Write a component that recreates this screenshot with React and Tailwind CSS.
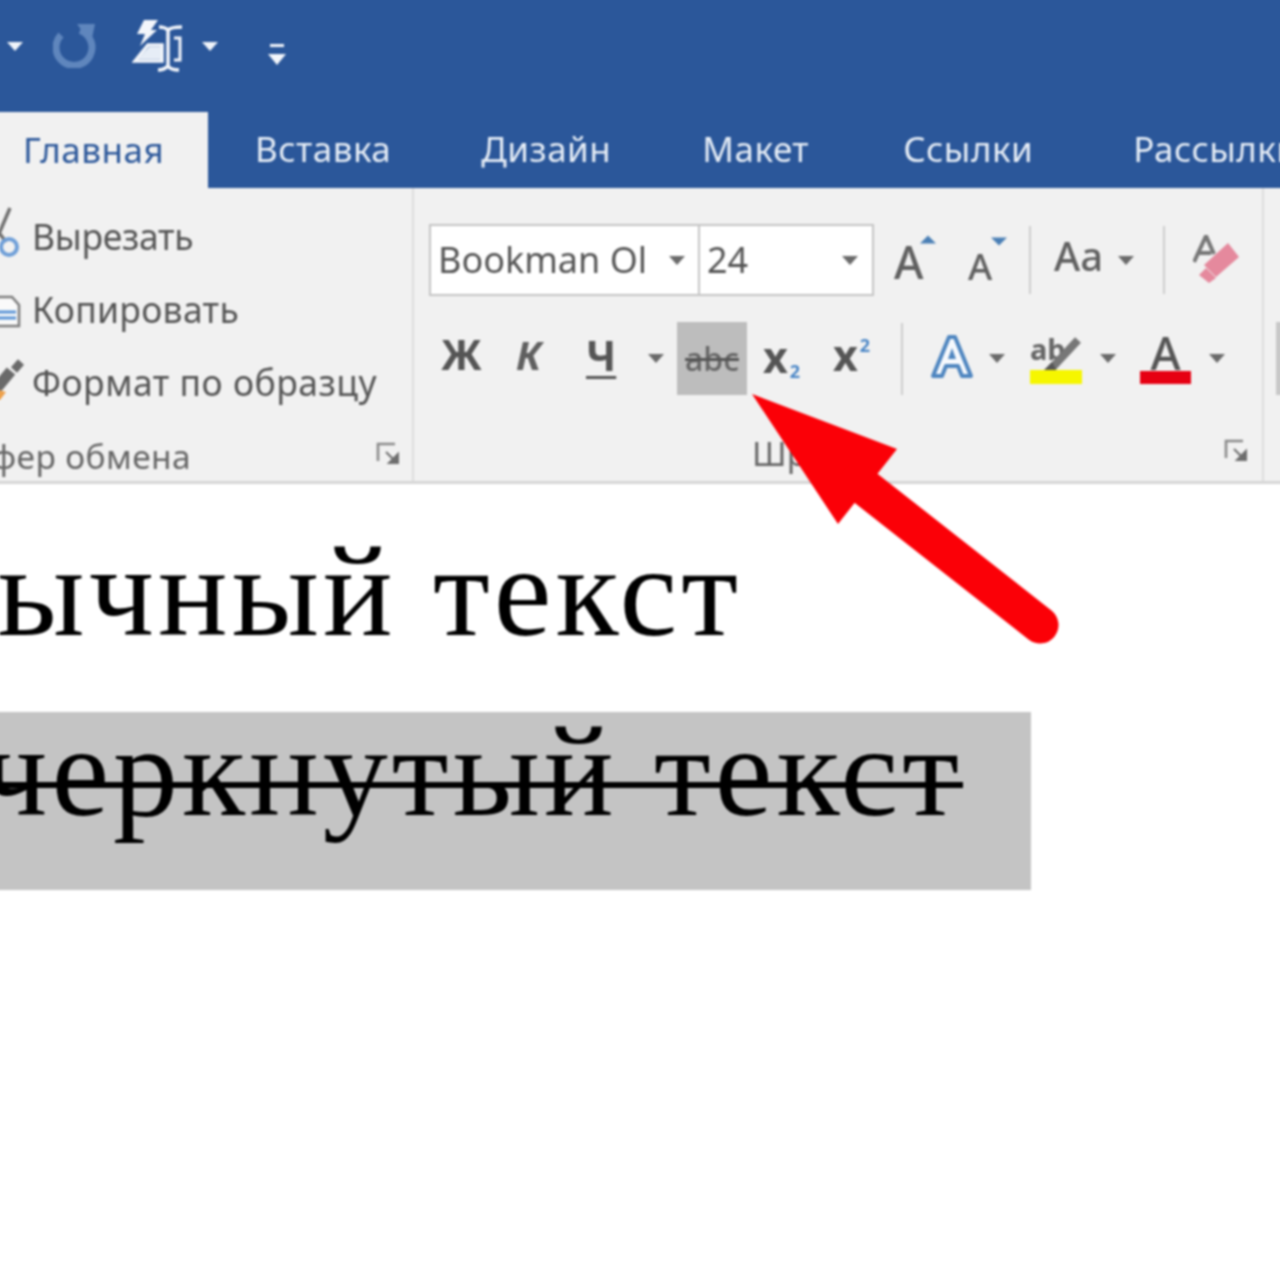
const Caret = ({ className = "", color = "#6a6a6a" }) => (
  <svg viewBox="0 0 16 9" className={`w-[16px] h-[9px] shrink-0 ${className}`}>
    <path d="M0 0H16L8 9Z" fill={color} />
  </svg>
);

const Launcher = ({ className = "" }) => (
  <svg viewBox="0 0 24 24" className={`w-[24px] h-[24px] shrink-0 ${className}`}>
    <path d="M2 20V3H19" fill="none" stroke="#8a8a8a" strokeWidth="2.6" />
    <path d="M10 11L20 21M22 13V22H13Z" fill="#6e6e6e" stroke="#6e6e6e" strokeWidth="2" />
  </svg>
);

const Sep = ({ className = "" }) => <div className={`w-[2px] shrink-0 bg-[#cdcdcd] ${className}`} />;

const Tab = ({ children, className = "" }) => (
  <div className={`text-[35px] leading-none tracking-[0.5px] text-[#e6edf6] whitespace-nowrap ${className}`}>{children}</div>
);

const ClipRow = ({ icon, children, className = "" }) => (
  <div className="h-[73.5px] flex items-center">
    <div className="w-[32px] h-[50px] shrink-0">{icon}</div>
    <div className={`text-[35.5px] leading-none text-[#555] whitespace-nowrap ${className}`}>{children}</div>
  </div>
);

const Combo = ({ text, className = "" }) => (
  <div className={`h-[72px] bg-white border-2 border-[#c4c4c4] flex items-center justify-between shrink-0 ${className}`}>
    <span className="text-[36px] leading-none text-[#555] whitespace-nowrap pl-[7px]">{text}</span>
    <Caret />
  </div>
);

export default function App() {
  return (
    <div className="w-[1280px] h-[1280px] overflow-hidden bg-white font-['Noto_Sans','Open_Sans',sans-serif]">
      <div className="w-[1288px] h-[1288px] -ml-[4px] -mt-[4px] bg-white blur-[0.8px] relative overflow-hidden">
        <div className="h-[192px] pt-[4px] bg-[#2b579a] flex flex-col">
          <div className="h-[112px] flex items-center pl-[4px]">
            <Caret color="#f0f4fa" className="ml-[7px] -mt-[20px]" />
            <svg viewBox="0 0 44 44" className="w-[44px] h-[44px] ml-[30px] -mt-[20px] shrink-0">
              <path d="M27 6.5A18 18 0 1 1 8 11" fill="none" stroke="#5f86bd" strokeWidth="7" />
              <path d="M24 0L42 0L38 19Z" fill="#5f86bd" />
            </svg>
            <svg viewBox="0 0 52 52" className="w-[52px] h-[52px] ml-[35px] -mt-[20px] shrink-0">
              <path d="M12 0H26L19 10H25L8 26L13 14H5Z" fill="#f3f6fb" />
              <path d="M3 41L16 25H30V41Z" fill="none" stroke="#f3f6fb" strokeWidth="3.5" />
              <path d="M6 39L17 27H29V39Z" fill="#e6edf6" />
              <path d="M27 7C31 7 34 8 36 10C38 8 41 7 50 7M36 10V46M26 50C30 50 33 49 36 46C38 49 41 50 47 50" fill="none" stroke="#f3f6fb" strokeWidth="3.5" />
              <path d="M42 18H48V40H42" fill="none" stroke="#f3f6fb" strokeWidth="3" />
            </svg>
            <Caret color="#f0f4fa" className="ml-[17px] -mt-[20px] w-[18px]" />
            <svg viewBox="0 0 20 22" className="w-[20px] h-[22px] ml-[48px] -mt-[2px] shrink-0">
              <path d="M3 1.5H17" stroke="#f3f6fb" strokeWidth="3" />
              <path d="M1 10H19L10 21Z" fill="#f3f6fb" />
            </svg>
          </div>
          <div className="h-[76px] flex">
            <div className="w-[212px] h-[77px] bg-[#f1f1f1] shrink-0 flex items-center pl-[27px] pb-[3px]">
              <span className="text-[35px] leading-none tracking-[0.5px] text-[#2b579a]">Главная</span>
            </div>
            <div className="flex items-center pb-[3px]">
              <Tab className="ml-[47px]">Вставка</Tab>
              <Tab className="ml-[90px]">Дизайн</Tab>
              <Tab className="ml-[91px]">Макет</Tab>
              <Tab className="ml-[94px]">Ссылки</Tab>
              <Tab className="ml-[100px]">Рассылки</Tab>
            </div>
          </div>
        </div>

        <div className="h-[296px] bg-[#f1f1f1] border-b-[3px] border-[#d6d6d6] flex">
          <div className="w-[418px] shrink-0 flex flex-col pl-[4px] pt-[12px] pb-[8px] border-r-2 border-[#dcdcdc] relative">
            <ClipRow
              className="tracking-[-0.3px]"
              icon={
                <svg viewBox="0 0 33 50" className="w-[33px] h-[50px] overflow-visible">
                  <path d="M-2 24L10 -4" stroke="#707070" strokeWidth="3.5" />
                  <path d="M0 22L6 30" stroke="#707070" strokeWidth="3.5" />
                  <circle cx="9" cy="35" r="8" fill="none" stroke="#6f9fd8" strokeWidth="4" />
                </svg>
              }
            >
              Вырезать
            </ClipRow>
            <ClipRow
              className="tracking-[0.3px]"
              icon={
                <svg viewBox="0 0 33 50" className="w-[33px] h-[50px] overflow-visible">
                  <path d="M-4 12H12L19 20V41H-4Z" fill="#fafafa" stroke="#7d7d7d" strokeWidth="2.5" />
                  <path d="M-4 27H16M-4 33H16" stroke="#5d95d6" strokeWidth="3" />
                </svg>
              }
            >
              Копировать
            </ClipRow>
            <ClipRow
              className="tracking-[0.5px]"
              icon={
                <svg viewBox="0 0 33 50" className="w-[33px] h-[50px] overflow-visible">
                  <path d="M-4 31L11 13" stroke="#6a6a6a" strokeWidth="11" />
                  <path d="M14 12L21 4" stroke="#6a6a6a" strokeWidth="8" />
                  <path d="M-5 31L6 34L0 42H-5Z" fill="#eda04a" />
                </svg>
              }
            >
              Формат по образцу
            </ClipRow>
            <div className="flex-1 flex items-center justify-between pr-[12px] pt-[14px]">
              <div className="flex justify-end w-[191px] pt-[6px]">
                <span className="text-[33.5px] leading-none tracking-[0.4px] text-[#666] whitespace-nowrap shrink-0">Буфер обмена</span>
              </div>
              <Launcher />
            </div>
          </div>

          <div className="w-[850px] shrink-0 flex flex-col pl-[15px] pt-[36px] border-r-2 border-[#dcdcdc]">
            <div className="h-[72px] flex items-center">
              <Combo text="Bookman Ol" className="w-[269px] border-r-0 pr-[13px]" />
              <Combo text="24" className="w-[176px] pr-[14px]" />
              <div className="ml-[20px] relative w-[42px] h-[50px] shrink-0">
                <span className="absolute left-0 bottom-[1px] text-[45px] leading-none font-medium text-[#606060]">A</span>
                <svg viewBox="0 0 16 8" className="absolute right-0 top-0 w-[16px] h-[9px]"><path d="M0 8H16L8 0Z" fill="#4a7fb5" /></svg>
              </div>
              <div className="ml-[32px] relative w-[39px] h-[46px] shrink-0">
                <span className="absolute left-0 bottom-[-1px] text-[37px] leading-none font-medium text-[#606060]">A</span>
                <svg viewBox="0 0 16 8" className="absolute right-0 top-0 w-[16px] h-[9px]"><path d="M0 0H16L8 8Z" fill="#4a7fb5" /></svg>
              </div>
              <Sep className="ml-[22px] h-[68px]" />
              <span className="ml-[23px] w-[50px] shrink-0 pb-[8px] text-[40px] leading-none font-medium text-[#606060]">Aa</span>
              <Caret className="ml-[14px]" />
              <Sep className="ml-[29px] h-[68px]" />
              <svg viewBox="0 0 46 50" className="ml-[28px] w-[46px] h-[50px] shrink-0">
                <path d="M1 27L13 1L21 19M6 18H18" fill="none" stroke="#777" strokeWidth="4" />
                <path d="M35 8L46 22L23 42L11 30Z" fill="#e5899d" />
                <path d="M6 40L13 33L23 43L16 48Z" fill="#e5899d" />
              </svg>
            </div>
            <div className="h-[73px] mt-[26px] flex items-center">
              <span className="ml-[12px] w-[42px] pb-[8px] text-[41px] leading-none font-bold text-[#555]">Ж</span>
              <span className="ml-[33px] w-[28px] pb-[8px] text-[40px] leading-none font-bold italic text-[#606060]">К</span>
              <span className="ml-[42px] w-[33px] pb-[8px] text-[42px] leading-none font-bold text-[#555] underline underline-offset-[5px] decoration-[3px]">Ч</span>
              <Caret className="ml-[29px]" />
              <div className="ml-[13px] w-[70px] h-[73px] bg-[#bdbdbd] flex items-center justify-center shrink-0">
                <span className="text-[32px] leading-none font-medium text-[#666] line-through decoration-[3px] decoration-[#555]">abc</span>
              </div>
              <div className="ml-[16px] w-[40px] flex items-baseline shrink-0 -mt-[4px]">
                <span className="text-[43px] leading-none font-bold text-[#555]">x</span>
                <span className="ml-[2px] text-[18px] leading-none font-bold text-[#4a86c6] translate-y-[5px]">2</span>
              </div>
              <div className="ml-[30px] w-[40px] flex items-start shrink-0 -mt-[8px]">
                <span className="text-[43px] leading-none font-bold text-[#555]">x</span>
                <span className="ml-[2px] text-[18px] leading-none font-bold text-[#4a86c6] translate-y-[3px]">2</span>
              </div>
              <Sep className="ml-[28px] h-[72px]" />
              <svg viewBox="0 0 44 46" className="ml-[27px] w-[44px] h-[46px] shrink-0 -mt-[6px]">
                <path d="M3 43L19 4H25L41 43H32L28 33H16L12 43Z" fill="#f6f9fd" stroke="#4f86c0" strokeWidth="4" strokeLinejoin="round" />
                <path d="M18 26L22 15L26 26Z" fill="#4f86c0" />
              </svg>
              <Caret className="ml-[15px]" />
              <div className="ml-[25px] relative w-[53px] h-[50px] shrink-0">
                <span className="absolute left-0 top-0 text-[29px] leading-none font-bold text-[#666]">ab</span>
                <svg viewBox="0 0 53 50" className="absolute inset-0 w-[53px] h-[50px]">
                  <path d="M20 36L48 6" stroke="#777" strokeWidth="8" />
                  <path d="M13 37L22 28L27 37Z" fill="#555" />
                </svg>
                <div className="absolute left-0 bottom-0 w-[52px] h-[14px] bg-[#f6f600]" />
              </div>
              <Caret className="ml-[17px]" />
              <div className="ml-[24px] relative w-[51px] h-[50px] shrink-0 flex flex-col items-center">
                <span className="absolute top-[-5px] text-[46px] leading-none font-medium text-[#555]">A</span>
                <div className="absolute left-0 bottom-0 w-[51px] h-[13px] bg-[#e60012]" />
              </div>
              <Caret className="ml-[18px]" />
            </div>
            <div className="flex-1 flex items-start pt-[42px] relative">
              <span className="ml-[323px] text-[33.5px] leading-none text-[#666] whitespace-nowrap">Шрифт</span>
              <Launcher className="absolute right-[14px] top-[43px]" />
            </div>
          </div>
          <div className="pt-[134px] pl-[12px]">
            <div className="w-[6px] h-[73px] bg-[#c8c8c8]" />
          </div>
        </div>

        <div className="flex flex-col pt-[37px] bg-white h-[800px]">
          <div className="w-[746px] h-[140px] flex justify-end items-center">
            <span className="text-[130px] leading-none tracking-[4px] text-black whitespace-nowrap shrink-0 font-['Liberation_Serif',serif]">Обычный текст</span>
          </div>
          <div className="w-[1035px] h-[178px] mt-[51px] bg-[#c4c4c4] flex items-start">
            <div className="w-[967px] -mt-[6px] flex justify-end shrink-0">
              <span className="relative text-[130px] leading-none tracking-[4px] text-black whitespace-nowrap shrink-0 font-['Liberation_Serif',serif]">
                Зачеркнутый текст
                <span className="absolute left-0 right-0 top-[76px] h-[6px] bg-black" />
              </span>
            </div>
          </div>
        </div>

        <svg viewBox="0 0 1280 1280" className="absolute left-[4px] top-[4px] w-[1280px] h-[1280px] pointer-events-none">
          <path d="M752 394L897 449L838 524Z" fill="#fb0007" />
          <path d="M858 482L1040 625" stroke="#fb0007" strokeWidth="37" strokeLinecap="round" />
        </svg>
      </div>
    </div>
  );
}
